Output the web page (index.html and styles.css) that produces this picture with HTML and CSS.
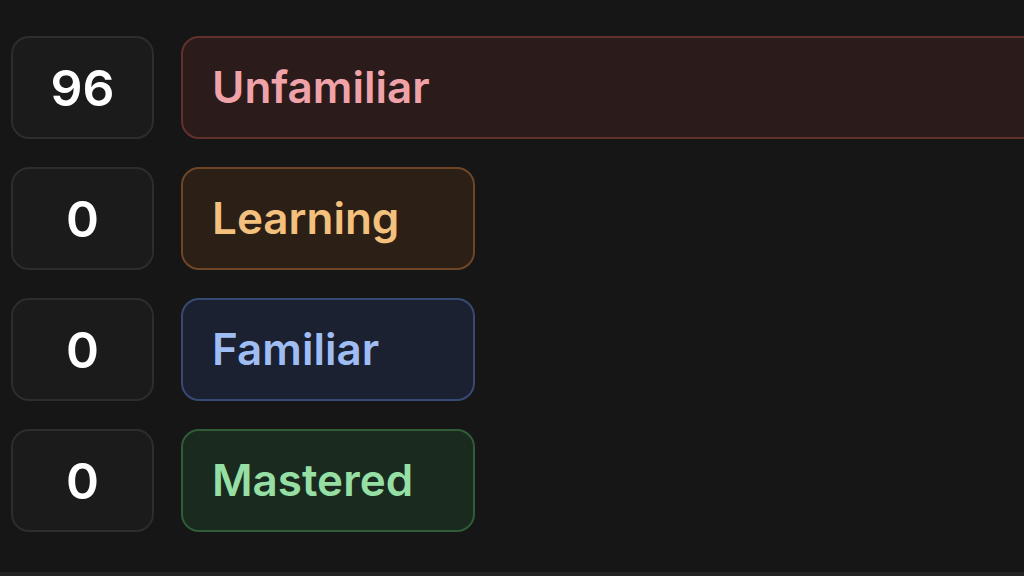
FILE: index.html
```html
<!DOCTYPE html>
<html>
<head>
<meta charset="utf-8">
<link rel="stylesheet" href="styles.css">
</head>
<body>
<div class="page">
  <div class="list">
    <div class="row">
      <div class="count">96</div>
      <div class="label label-unfamiliar label-wide">Unfamiliar</div>
    </div>
    <div class="row">
      <div class="count">0</div>
      <div class="label label-learning">Learning</div>
    </div>
    <div class="row">
      <div class="count">0</div>
      <div class="label label-familiar">Familiar</div>
    </div>
    <div class="row">
      <div class="count">0</div>
      <div class="label label-mastered">Mastered</div>
    </div>
  </div>
  <div class="footer-line"></div>
</div>
</body>
</html>
```
FILE: styles.css
```css
html, body {
  margin: 0;
  padding: 0;
  background: #161616;
  overflow: hidden;
}
.page {
  width: 1024px;
  height: 576px;
  display: flex;
  flex-direction: column;
  font-family: Inter, "Noto Sans", sans-serif;
  overflow: hidden;
}
.list {
  flex: 1;
  display: flex;
  flex-direction: column;
  gap: 28px;
  padding: 36px 0 0 11px;
}
.row {
  display: flex;
  gap: 27px;
  height: 103px;
}
.count {
  box-sizing: border-box;
  width: 143px;
  height: 103px;
  flex: none;
  border: 2px solid #2d2d2d;
  background: #1b1b1b;
  border-radius: 18px;
  color: #ffffff;
  font-size: 50px;
  font-weight: 600;
  display: flex;
  align-items: center;
  justify-content: center;
}
.label {
  box-sizing: border-box;
  width: 294px;
  height: 103px;
  flex: none;
  border: 2px solid;
  border-radius: 18px;
  font-size: 44px;
  font-weight: 600;
  display: flex;
  align-items: center;
  padding-left: 29px;
  padding-bottom: 1px;
}
.label-wide {
  width: 900px;
}
.label-unfamiliar {
  background: #2b1b1b;
  border-color: #62302d;
  color: #efa3a9;
}
.label-learning {
  background: #2b1f16;
  border-color: #6e4527;
  color: #f3c07e;
}
.label-familiar {
  background: #1b2131;
  border-color: #364a73;
  color: #9fbdf3;
}
.label-mastered {
  background: #1a2a1e;
  border-color: #305c37;
  color: #95dea4;
}
.footer-line {
  height: 4px;
  background: #232323;
  flex: none;
}
```
